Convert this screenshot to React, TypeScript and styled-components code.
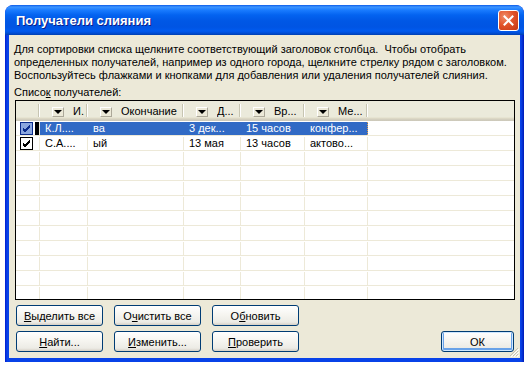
import React from "react";
import styled, { createGlobalStyle } from "styled-components";

const GlobalStyle = createGlobalStyle`
  html, body { margin: 0; padding: 0; background: #fff; }
  body { font-family: "Liberation Sans", Arial, sans-serif; font-size: 11px; }
  #root { padding: 5px; }
`;

const COLS = "24px 48px 96px 57px 64px 63px 1fr";

const Window = styled.div`
  position: relative;
  width: 519px;
  height: 357px;
  box-sizing: border-box;
  display: flex;
  flex-direction: column;
  border-radius: 8px 8px 0 0;
  background: linear-gradient(to right, #0019cf 0px, #0842e8 2px, #0842e8 516px, #001ab6 519px);
  padding: 0 4px 4px 4px;
  overflow: hidden;
`;

const TitleBar = styled.div`
  height: 30px;
  margin: 0 -4px;
  padding: 0 5px 0 11px;
  display: flex;
  align-items: center;
  justify-content: space-between;
  background: linear-gradient(
    to bottom,
    #0a5be8 0px,
    #3d95ff 2px,
    #1a7cff 5px,
    #0363f0 10px,
    #0057e5 16px,
    #0054e3 22px,
    #005aef 26px,
    #004fd8 28px,
    #0040b0 30px
  );
  border-radius: 8px 8px 0 0;
`;

const Title = styled.span`
  color: #fff;
  font-family: "Liberation Sans", Arial, sans-serif;
  font-weight: bold;
  font-size: 13px;
  text-shadow: 1px 1px 0 #0a1e8c;
`;

const CloseButton = styled.div`
  width: 21px;
  height: 21px;
  box-sizing: border-box;
  border: 1px solid #fff;
  border-radius: 3px;
  background: radial-gradient(circle at 30% 30%, #f08e6a 0%, #e2542a 45%, #c33614 100%);
  display: flex;
  align-items: center;
  justify-content: center;
`;

const Body = styled.div`
  flex: 1;
  background: #ece9d8;
  padding: 8px 5px 0 5px;
  display: flex;
  flex-direction: column;
`;

const Intro = styled.p`
  margin: 0;
  line-height: 13px;
  color: #000;
`;

const ListLabel = styled.div`
  margin-top: 3px;
  line-height: 14px;
  color: #000;
`;

const Table = styled.div`
  margin: 1px 0 0 1px;
  width: 500px;
  height: 200px;
  box-sizing: border-box;
  border: 1px solid #000;
  background: #fff;
  overflow: hidden;
`;

const HeaderRow = styled.div`
  display: grid;
  grid-template-columns: ${COLS};
  height: 20px;
  background: linear-gradient(to bottom, #ebeadb 0px, #ebeadb 16px, #e2dec9 17px, #d6d2c2 18px, #cbc7b8 20px);
`;

const HeaderCell = styled.div<{ $last?: boolean }>`
  position: relative;
  display: flex;
  align-items: center;
  padding-left: 12px;
  overflow: hidden;
  white-space: nowrap;
  color: #000;
  &::after {
    content: "";
    display: ${(p) => (p.$last ? "none" : "block")};
    position: absolute;
    right: 1px;
    top: 3px;
    bottom: 4px;
    width: 1px;
    background: #c7c5b2;
    box-shadow: 1px 0 0 #fff;
  }
`;

const DropButton = styled.span`
  flex: none;
  width: 12px;
  height: 10px;
  box-sizing: border-box;
  border: 1px solid #fff;
  border-right-color: #aca899;
  border-bottom-color: #aca899;
  background: #ece9d8;
  display: flex;
  align-items: center;
  justify-content: center;
  margin-top: 1px;
  &::before {
    content: "";
    border-left: 4px solid transparent;
    border-right: 4px solid transparent;
    border-top: 4px solid #000;
  }
`;

const HeaderText = styled.span`
  margin-left: 9px;
  overflow: hidden;
  text-overflow: ellipsis;
`;

const Row = styled.div`
  display: grid;
  grid-template-columns: ${COLS};
  height: 14px;
  box-sizing: border-box;
  border-bottom: 1px solid #ede9d8;
  margin-top: 1px;
`;

const Cell = styled.div<{ $sel?: boolean; $noline?: boolean; $focusEnd?: boolean }>`
  box-sizing: border-box;
  height: 13px;
  line-height: 13px;
  padding-left: 5px;
  white-space: nowrap;
  overflow: hidden;
  background: ${(p) => (p.$sel ? "#316ac5" : "transparent")};
  color: ${(p) => (p.$sel ? "#fff" : "#000")};
  border-right: ${(p) =>
    p.$noline ? "none" : p.$focusEnd ? "1px dotted #e0a050" : p.$sel ? "1px solid #316ac5" : "1px solid #ede9d8"};
`;

const CheckCell = styled.div<{ $focus?: boolean }>`
  position: relative;
  height: 13px;
  border-right: 1px solid #ede9d8;
  display: flex;
  align-items: center;
  padding-left: 4px;
  &::after {
    content: "";
    display: ${(p) => (p.$focus ? "block" : "none")};
    position: absolute;
    right: 0;
    top: 0;
    width: 4px;
    height: 13px;
    background: #000;
  }
`;

const Check = styled.span<{ $sel?: boolean }>`
  width: 13px;
  height: 13px;
  box-sizing: border-box;
  border: 1px solid ${(p) => (p.$sel ? "#0b2c8c" : "#000")};
  background: ${(p) => (p.$sel ? "#8aa6de" : "#fff")};
  display: flex;
  align-items: center;
  justify-content: center;
`;

const ButtonArea = styled.div`
  display: grid;
  grid-template-columns: 87px 87px 87px 1fr 73px;
  grid-template-rows: 21px 21px;
  column-gap: 11px;
  row-gap: 5px;
  margin: 5px 0 0 2px;
  width: 498px;
`;

const Button = styled.button<{ $default?: boolean }>`
  font-family: "Liberation Sans", Arial, sans-serif;
  font-size: 11px;
  color: #000;
  padding: 0;
  height: 21px;
  border: 1px solid #003c74;
  border-radius: 3px;
  background: linear-gradient(to bottom, #ffffff 0%, #f5f4ef 50%, #ecebe5 85%, #d6d0c5 100%);
  box-shadow: ${(p) =>
    p.$default ? "inset 0 0 0 1px #cee7ff, inset 0 -1px 0 2px #69a2e8" : "none"};
  u { text-decoration: underline; }
`;

const Spacer = styled.div``;

const Grip = styled.svg`
  position: absolute;
  right: 5px;
  bottom: 5px;
`;

function CheckMark({ color }: { color: string }) {
  return (
    <svg width="9" height="9" viewBox="0 0 9 9">
      <path d="M1 4 L3 6 L8 1 M1 5 L3 7 L8 2 M1 6 L3 8 L8 3" stroke={color} strokeWidth="1" fill="none" />
    </svg>
  );
}

const headers = ["И.", "Окончание", "Д...", "Вр...", "Ме..."];

const rows = [
  { sel: true, cells: ["К.Л....", "ва", "3 дек...", "15 часов", "конфер..."] },
  { sel: false, cells: ["С.А....", "ый", "13 мая", "13 часов", "актово..."] },
];

export default function App() {
  const empty = Array.from({ length: 11 });
  return (
    <>
      <GlobalStyle />
      <Window>
        <TitleBar>
          <Title>Получатели слияния</Title>
          <CloseButton>
            <svg width="11" height="11" viewBox="0 0 11 11">
              <path d="M1.5 1.5 L9.5 9.5 M9.5 1.5 L1.5 9.5" stroke="#fff" strokeWidth="2" strokeLinecap="square" />
            </svg>
          </CloseButton>
        </TitleBar>
        <Body>
          <Intro>
            Для сортировки списка щелкните соответствующий заголовок столбца.&nbsp; Чтобы отобрать
            <br />
            определенных получателей, например из одного города, щелкните стрелку рядом с заголовком.
            <br />
            Воспользуйтесь флажками и кнопками для добавления или удаления получателей слияния.
          </Intro>
          <ListLabel>
            Списо<u>к</u> получателей:
          </ListLabel>
          <Table>
            <HeaderRow>
              <HeaderCell />
              {headers.map((h) => (
                <HeaderCell key={h}>
                  <DropButton />
                  <HeaderText>{h}</HeaderText>
                </HeaderCell>
              ))}
              <HeaderCell $last />
            </HeaderRow>
            {rows.map((r, i) => (
              <Row key={i}>
                <CheckCell $focus={r.sel}>
                  <Check $sel={r.sel}>
                    <CheckMark color={r.sel ? "#0b2c8c" : "#000"} />
                  </Check>
                </CheckCell>
                {r.cells.map((c, j) => (
                  <Cell key={j} $sel={r.sel} $focusEnd={r.sel && j === r.cells.length - 1}>
                    {c}
                  </Cell>
                ))}
                <Cell $noline />
              </Row>
            ))}
            {empty.map((_, i) => (
              <Row key={"e" + i}>
                <CheckCell />
                <Cell />
                <Cell />
                <Cell />
                <Cell />
                <Cell />
                <Cell $noline />
              </Row>
            ))}
          </Table>
          <ButtonArea>
            <Button>
              <u>В</u>ыделить все
            </Button>
            <Button>
              О<u>ч</u>истить все
            </Button>
            <Button>
              О<u>б</u>новить
            </Button>
            <Spacer />
            <Spacer />
            <Button>
              <u>Н</u>айти...
            </Button>
            <Button>
              <u>И</u>зменить...
            </Button>
            <Button>
              <u>П</u>роверить
            </Button>
            <Spacer />
            <Button $default>ОК</Button>
          </ButtonArea>
          <Grip width="10" height="10" viewBox="0 0 10 10">
            <path d="M9 1 L1 9 M9 4 L4 9 M9 7 L7 9" stroke="#c5c2b2" strokeWidth="1" />
            <path d="M10 2 L2 10 M10 5 L5 10 M10 8 L8 10" stroke="#fff" strokeWidth="1" />
          </Grip>
        </Body>
      </Window>
    </>
  );
}
